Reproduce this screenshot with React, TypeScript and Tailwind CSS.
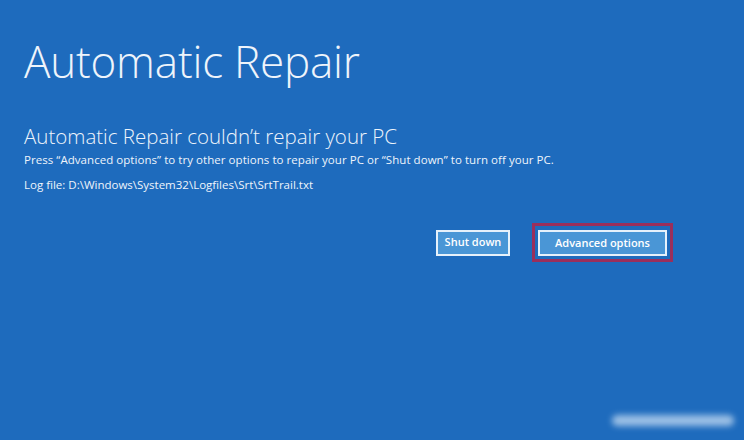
export default function App() {
  return (
    <div
      className="relative w-[744px] h-[440px] overflow-hidden bg-[#1e6bbd] text-[#eef4fb]"
      style={{ fontFamily: '"Open Sans", "Noto Sans", sans-serif' }}
    >
      <div className="pl-[24px] pt-[33px]">
        <h1 className="text-[44px] font-light leading-[56px] tracking-[-0.2px]">Automatic Repair</h1>
        <h2 className="mt-[33px] text-[20.5px] font-light leading-[28px]">
          Automatic Repair couldn’t repair your PC
        </h2>
        <p className="text-[11.5px] leading-[20px] tracking-[0.05px]">
          Press “Advanced options” to try other options to repair your PC or “Shut down” to turn off your PC.
        </p>
        <p className="mt-[6px] text-[11.5px] leading-[18px]">
          Log file: D:\Windows\System32\Logfiles\Srt\SrtTrail.txt
        </p>
      </div>

      <div className="flex items-center justify-end gap-[22px] pr-[71px] mt-[35px]">
        <button className="w-[74px] h-[26px] border-2 border-[#e6f1fb] bg-[#4a96d6] text-[11px] font-semibold text-white">
          Shut down
        </button>
        <div className="border-[3px] border-[#9a2f5c] p-[3px] -my-[6px]">
          <button className="w-[129px] h-[26px] border-2 border-[#e6f1fb] bg-[#4a96d6] text-[11px] font-semibold text-white">
            Advanced options
          </button>
        </div>
      </div>

      <div className="absolute right-[10px] bottom-[14px] w-[122px] h-[11px] rounded-full bg-[#bcd6f0] blur-[3px] opacity-80" />
    </div>
  );
}
